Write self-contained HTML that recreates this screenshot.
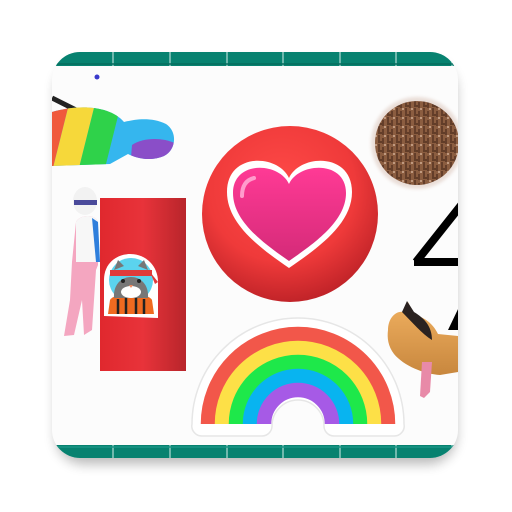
<!DOCTYPE html>
<html><head><style>
html,body{margin:0;padding:0;background:#fff;width:512px;height:512px;overflow:hidden}
</style></head><body>
<svg width="512" height="512" viewBox="0 0 512 512" xmlns="http://www.w3.org/2000/svg">
<defs>
<filter id="sh" x="-20%" y="-20%" width="140%" height="140%"><feGaussianBlur stdDeviation="6"/></filter>
<filter id="bl"><feGaussianBlur stdDeviation="1.5"/></filter>
<clipPath id="card"><rect x="52" y="52" width="406" height="406" rx="28"/></clipPath>
<clipPath id="body"><path d="M52 112 C80 104 110 106 124 122 C132 120 150 116 166 124 C178 132 176 150 164 156 C150 162 136 158 128 154 L110 164 L52 166Z"/></clipPath>
<radialGradient id="ball" cx="0.45" cy="0.35" r="0.7">
<stop offset="0" stop-color="#ff4a48"/><stop offset="0.6" stop-color="#ef3a3a"/><stop offset="1" stop-color="#b81f25"/></radialGradient>
<linearGradient id="heart" x1="0" y1="0" x2="0" y2="1"><stop offset="0" stop-color="#ff3a95"/><stop offset="1" stop-color="#d42a78"/></linearGradient>
<linearGradient id="cyl" x1="0" y1="0" x2="1" y2="0"><stop offset="0" stop-color="#e0282e"/><stop offset="0.5" stop-color="#e8333a"/><stop offset="1" stop-color="#b8252b"/></linearGradient>
<linearGradient id="dog" x1="0" y1="0" x2="0" y2="1"><stop offset="0" stop-color="#f0b060"/><stop offset="1" stop-color="#c8873e"/></linearGradient>
<pattern id="bark" width="9" height="9" patternUnits="userSpaceOnUse"><rect width="9" height="9" fill="#8b5d40"/><path d="M1 0v6M5 3v6M0 7h4" stroke="#4a2a1a" stroke-width="1.2"/><rect x="6" y="0" width="2" height="2" fill="#c09a80"/></pattern>
</defs>
<rect x="56" y="62" width="400" height="402" rx="28" fill="#000" opacity="0.28" filter="url(#sh)"/>
<g clip-path="url(#card)">
<rect x="52" y="52" width="406" height="406" fill="#fcfcfc"/>
<rect x="52" y="52" width="406" height="14" fill="#078270"/>
<rect x="52" y="445" width="406" height="13" fill="#078270"/>
<g stroke="#6fb8ad" stroke-width="2">
<path d="M113 52v14M170 52v14M227 52v14M283 52v14M340 52v14M396 52v14M452 52v14"/>
<path d="M113 445v13M170 445v13M227 445v13M283 445v13M340 445v13M396 445v13M452 445v13"/>
</g>
<path d="M52 64H458" stroke="#066c5e" stroke-width="1.5"/>
<path d="M52 447H458" stroke="#1a9585" stroke-width="1.5"/>
<circle cx="97" cy="77" r="2.5" fill="#3a3acc"/>
<!-- rainbow man -->
<path d="M52 98l24 12" stroke="#222" stroke-width="5"/>
<g clip-path="url(#body)">
<rect x="40" y="90" width="150" height="90" fill="#35b6ee"/>
<path d="M40 100 L70 100 L50 180 L40 180Z" fill="#f05a3c"/>
<path d="M70 100 L96 100 L76 180 L50 180Z" fill="#f6d83a"/>
<path d="M96 100 L122 100 L102 180 L76 180Z" fill="#2fd24a"/>
<path d="M132 145 C145 136 168 138 178 145 L178 170 L130 170Z" fill="#8a4ec8"/>
</g>
<!-- cylinder -->
<rect x="100" y="198" width="86" height="173" fill="url(#cyl)"/>
<!-- figure -->
<ellipse cx="85" cy="201" rx="12" ry="14" fill="#f2f2f2"/>
<rect x="74" y="200" width="23" height="5" fill="#4a4a9a"/>
<path d="M76 222 C80 214 96 214 98 222 L98 265 L96 270 L92 330 L84 335 L82 300 L74 335 L64 336 L70 300 L72 262Z" fill="#f4a6c0"/>
<path d="M76 222 C80 214 96 214 98 222 L96 262 L76 262Z" fill="#f7f7f7"/>
<path d="M92 218 L98 222 L100 262 L96 262Z" fill="#2f7fdc"/>
<!-- cat sticker -->
<path d="M104 316 L104 280 C104 262 118 254 130 254 C146 254 158 266 158 282 L158 318Z" fill="#fff"/>
<circle cx="131" cy="280" r="22" fill="#5bd3ee"/>
<path d="M108 314 L110 300 C114 292 148 292 152 300 L154 314Z" fill="#ef6a20"/>
<path d="M118 299v15M126 297v17M136 297v17M144 299v15" stroke="#222" stroke-width="2.5"/>
<path d="M114 298 C112 270 150 270 148 298Z" fill="#777"/>
<path d="M114 270l4-10 6 6M148 270l-4-10-6 6" fill="#777"/>
<rect x="110" y="270" width="42" height="6" fill="#e03a3a"/>
<path d="M150 272 l8 10 l-3 2z" fill="#e03a3a"/>
<ellipse cx="131" cy="292" rx="10" ry="6" fill="#fff"/>
<circle cx="123" cy="281" r="2" fill="#222"/><circle cx="139" cy="281" r="2" fill="#222"/>
<path d="M129 285h4l-2 3z" fill="#f08a60"/>
<!-- ball & heart -->
<circle cx="290" cy="214" r="88" fill="url(#ball)"/>
<path d="M289 178 C300 154 352 152 352 192 C352 224 318 248 289 268 C260 248 227 224 227 192 C227 152 278 154 289 178Z" fill="#fff"/>
<path d="M289 184 C299 162 346 160 346 193 C346 221 315 243 289 261 C263 243 233 221 233 193 C233 160 279 162 289 184Z" fill="url(#heart)"/>
<path d="M242 196 C242 186 246 180 254 178" stroke="#ff9ccc" stroke-width="4" fill="none" stroke-linecap="round"/>
<!-- dirt circle -->
<circle cx="417" cy="143" r="46" fill="#d8c0b4" opacity="0.5" filter="url(#bl)"/>
<circle cx="417" cy="143" r="42" fill="url(#bark)"/>
<!-- triangle -->
<path d="M416 262 L462 204 M414 262 H462" stroke="#000" stroke-width="8" fill="none"/>
<path d="M448 330 L460 305 L460 330Z" fill="#000"/>
<!-- dog -->
<path d="M388 330 C388 318 396 310 404 312 L408 302 L414 314 C424 318 432 322 438 334 L458 336 L458 372 L440 375 C424 374 404 366 394 354 C388 346 387 338 388 330Z" fill="url(#dog)"/>
<path d="M402 312 L407 301 L414 312 C424 318 432 326 432 340 C422 334 412 322 402 312Z" fill="#2a2220"/>
<path d="M422 362 L432 362 L430 392 L424 398 L420 396Z" fill="#e88aa8"/>
<!-- rainbow sticker -->
<path d="M192 424 A106 106 0 0 1 404 424 A10 10 0 0 1 394 436 H334 A10 10 0 0 1 324 426 A26 26 0 0 0 272 426 A10 10 0 0 1 262 436 H202 A10 10 0 0 1 192 424Z" fill="#fff" stroke="#e6e6e6" stroke-width="1.5"/>
<g fill="none" stroke-width="14.5">
<path d="M208 424 A90 90 0 0 1 388 424" stroke="#f2574a"/>
<path d="M222 424 A76 76 0 0 1 374 424" stroke="#fde047"/>
<path d="M236 424 A62 62 0 0 1 360 424" stroke="#1ee84a"/>
<path d="M250 424 A48 48 0 0 1 346 424" stroke="#08b4f0"/>
<path d="M264 424 A34 34 0 0 1 332 424" stroke="#a65ae6"/>
</g>
</g>
</svg>
</body></html>
